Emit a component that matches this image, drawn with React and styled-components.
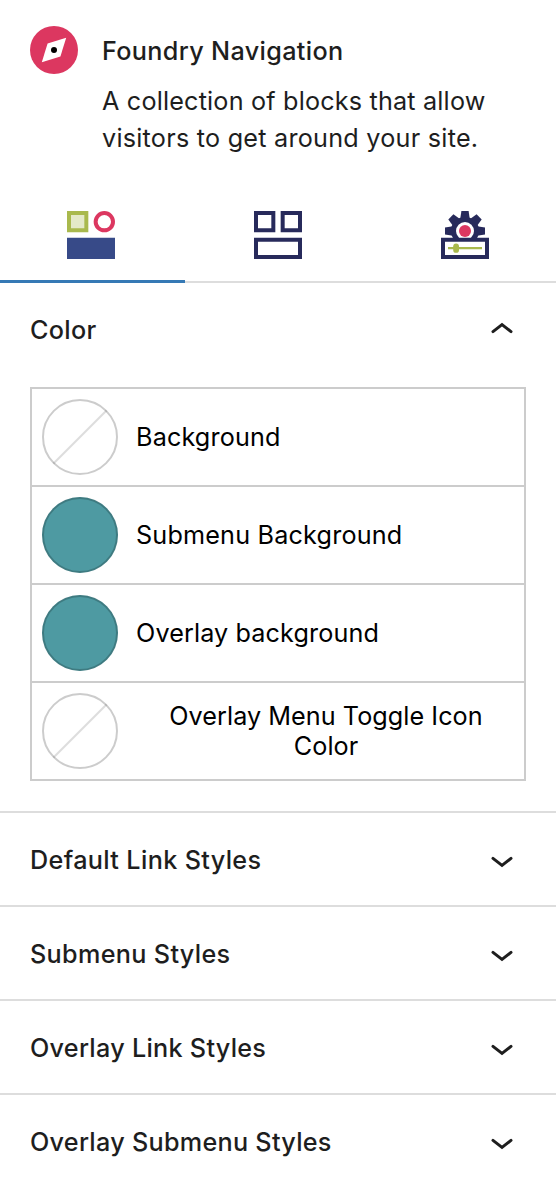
import React from 'react'
import styled, { createGlobalStyle } from 'styled-components'

const GlobalStyle = createGlobalStyle`
* {
  box-sizing: border-box;
}
body {
  margin: 0;
  background: #fff;
  color: #1e1e1e;
  font-family: Inter, "Liberation Sans", sans-serif;
  font-size: 25.2px;
}
button {
  font: inherit;
  color: inherit;
  background: none;
  border: none;
  padding: 0;
  cursor: pointer;
}
`;

const colors = [
  { label: 'Background', spacing: '0.15px' },
  { label: 'Submenu Background', fill: '#4e9aa2', spacing: '0.18px' },
  { label: 'Overlay background', fill: '#4e9aa2', spacing: '0.12px' },
  { label: 'Overlay Menu Toggle Icon Color', spacing: '0.05px' },
]

const panels = [
  { title: 'Default Link Styles', spacing: '0.35px' },
  { title: 'Submenu Styles', spacing: '0.33px' },
  { title: 'Overlay Link Styles', spacing: '0.28px' },
  { title: 'Overlay Submenu Styles', spacing: '0.28px' },
]

function CompassIcon() {
  return (
    <Icon viewBox="0 0 48 48">
      <circle cx="24" cy="24" r="24" fill="#dc3760" />
      <path d="M36.2 11.8 30.4 30.4 11.8 36.2 17.6 17.6Z" fill="#fff" />
      <circle cx="24" cy="24" r="3" fill="#000" />
    </Icon>
  )
}

function StylesIcon() {
  return (
    <Icon viewBox="0 0 48 48">
      <path d="M2 2h17.33v17.33H2z" fill="#e4e9c8" stroke="#a9b94d" strokeWidth="4" />
      <circle cx="37.33" cy="10.67" r="8.67" fill="none" stroke="#dc3760" strokeWidth="4" />
      <path d="M0 26.67h48V48H0z" fill="#374a88" />
    </Icon>
  )
}

function LayoutIcon() {
  return (
    <Icon viewBox="0 0 48 48">
      <g fill="none" stroke="#272a5b" strokeWidth="4">
        <path d="M2 2h17.33v17.33H2z" />
        <path d="M28.67 2H46v17.33H28.67z" />
        <path d="M2 28.67h44V46H2z" />
      </g>
    </Icon>
  )
}

function SettingsIcon() {
  return (
    <Icon viewBox="0 0 48 48">
      <g fill="#272a5b">
        <circle cx="24" cy="20" r="14" />
        {[-90, -45, 0, 45, 90].map((angle) => (
          <path key={angle} d="M19.2 8 20.4 0h7.2l1.2 8z" transform={`rotate(${angle} 24 20)`} />
        ))}
      </g>
      <circle cx="24" cy="20" r="9" fill="#fff" />
      <circle cx="24" cy="20" r="6" fill="#dc3760" />
      <path d="M2 28.67h44V46H2z" fill="#fff" stroke="#272a5b" strokeWidth="4" />
      <path d="M7 36h34v2.3H7z" fill="#a9b94d" />
      <rect x="12.2" y="32.4" width="5.8" height="9.4" rx="2.9" fill="#a9b94d" />
    </Icon>
  )
}

function Chevron({ up }) {
  return (
    <ChevronIcon viewBox="0 0 24 16">
      <path d={up ? 'M3 11.6 12 4.6l9 7' : 'M3 4.4 12 11.4l9-7'} />
    </ChevronIcon>
  )
}

export default function App() {
  return (
    <Sidebar>
      <GlobalStyle />
      <BlockCard>
        <CompassIcon />
        <BlockInfo>
          <BlockTitle $spacing="0.34px">Foundry Navigation</BlockTitle>
          <Description>
            <Line $spacing="0.18px">A collection of blocks that allow</Line>
            <Line $spacing="0.24px">visitors to get around your site.</Line>
          </Description>
        </BlockInfo>
      </BlockCard>
      <Tabs>
        <Tab $active><StylesIcon /></Tab>
        <Tab><LayoutIcon /></Tab>
        <Tab><SettingsIcon /></Tab>
      </Tabs>
      <ColorHeader>
        <PanelTitle $spacing="0.3px">Color</PanelTitle>
        <Chevron up />
      </ColorHeader>
      <ColorList>
        {colors.map(({ label, fill, spacing }) => (
          <ColorRow key={label}>
            <Swatch viewBox="0 0 76 76">
              {fill
                ? <circle cx="38" cy="38" r="38" fill={fill} />
                : <path d="M11.5 64.5 64.5 11.5" stroke="#ddd" strokeWidth="2" />}
              <circle cx="38" cy="38" r="37" fill="none" stroke="#000" strokeOpacity="0.2" strokeWidth="2" />
            </Swatch>
            <ColorLabel $spacing={spacing}>{label}</ColorLabel>
          </ColorRow>
        ))}
      </ColorList>
      {panels.map(({ title, spacing }) => (
        <PanelHeader key={title}>
          <PanelTitle $spacing={spacing}>{title}</PanelTitle>
          <Chevron />
        </PanelHeader>
      ))}
    </Sidebar>
  )
}

const Sidebar = styled.div`
width: 556px;
height: 1200px;
overflow: hidden;
`;

const Icon = styled.svg`
display: block;
width: 48px;
height: 48px;
flex: none;
`;

const BlockCard = styled.div`
height: 187px;
padding: 26px 30px 0;
display: flex;
align-items: flex-start;
gap: 24px;
`;

const BlockInfo = styled.div`
white-space: nowrap;
`;

const BlockTitle = styled.h2`
margin: 6px 0 13px;
font-size: inherit;
font-weight: 500;
line-height: 38px;
letter-spacing: ${(p) => p.$spacing};
`;

const Description = styled.p`
margin: 0;
`;

const Line = styled.span`
display: block;
line-height: 37px;
letter-spacing: ${(p) => p.$spacing};
`;

const Tabs = styled.div`
height: 96px;
display: grid;
grid-template-columns: 185px 1fr 185px;
box-shadow: inset 0 -2px #ddd;
`;

const Tab = styled.button`
display: flex;
justify-content: center;
align-items: flex-start;
padding-top: 24px;
box-shadow: ${(p) => (p.$active ? 'inset 0 -3px #3579b5' : 'none')};
&:first-child {
  padding-right: 3px;
}
&:last-child {
  padding-left: 3px;
}
`;

const ColorHeader = styled.div`
height: 104px;
padding: 0 42px 10px 30px;
display: flex;
align-items: center;
justify-content: space-between;
svg {
  margin-bottom: 4px;
}
`;

const PanelTitle = styled.h3`
margin: 0;
font-size: inherit;
font-weight: 500;
white-space: nowrap;
letter-spacing: ${(p) => p.$spacing};
`;

const ColorList = styled.div`
margin: 0 30px 30px;
border: 2px solid #ccc;
`;

const ColorRow = styled.button`
width: 100%;
height: 98px;
padding: 0 10px;
display: flex;
align-items: center;
gap: 18px;
color: #000;
border-bottom: 2px solid #ccc;
&:last-child {
  height: 96px;
  padding-right: 8px;
  border-bottom: none;
}
`;

const Swatch = styled.svg`
width: 76px;
height: 76px;
flex: none;
`;

const ColorLabel = styled.span`
line-height: 30px;
text-align: center;
letter-spacing: ${(p) => p.$spacing};
`;

const PanelHeader = styled.div`
height: 94px;
padding: 2px 42px 0 30px;
border-top: 2px solid #ddd;
display: flex;
align-items: center;
justify-content: space-between;
svg {
  margin-top: 4px;
}
`;

const ChevronIcon = styled.svg`
width: 24px;
height: 16px;
fill: none;
stroke: #1e1e1e;
stroke-width: 3;
stroke-linecap: round;
`;
